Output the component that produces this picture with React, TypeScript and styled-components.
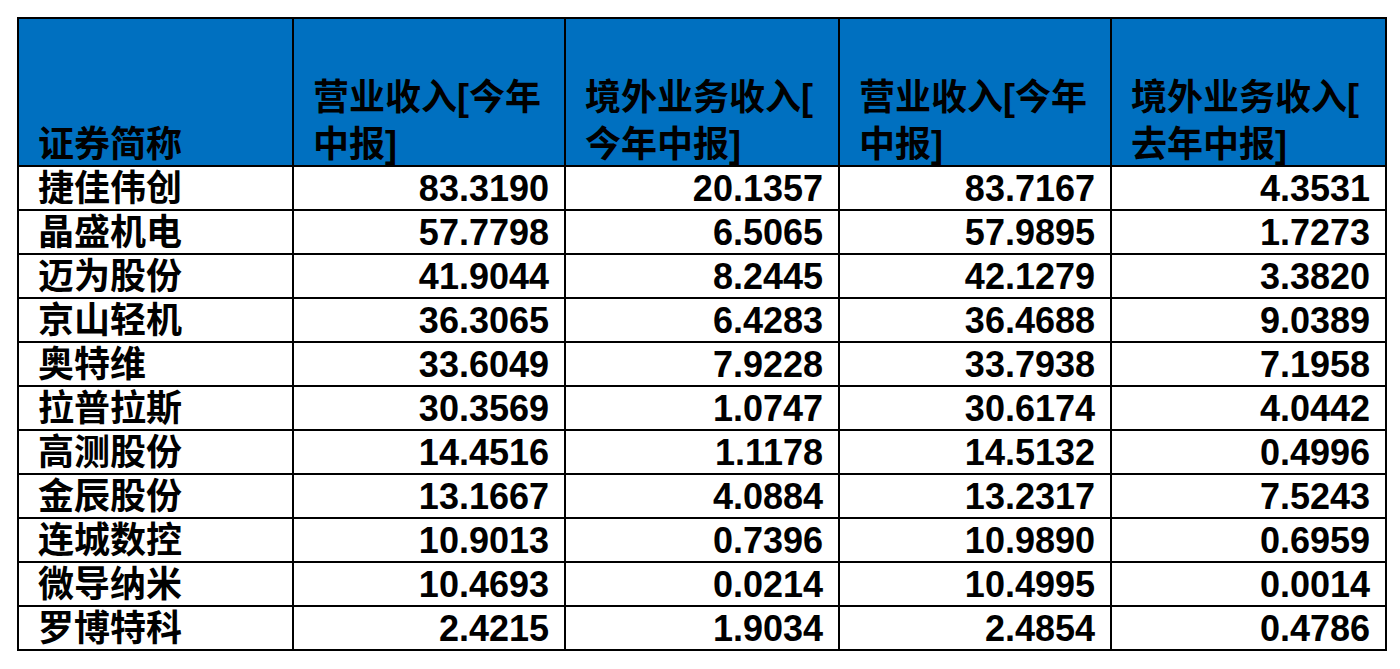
import styled, { createGlobalStyle } from "styled-components"

const GlobalStyle = createGlobalStyle`
  html, body {
    margin: 0;
    padding: 0;
    background: #ffffff;
  }
`

const Page = styled.div`
  padding: 17px 0 0 17px;
  width: 1400px;
  height: 669px;
  box-sizing: border-box;
  overflow: hidden;
`

const Table = styled.table`
  border-collapse: collapse;
  table-layout: fixed;
  width: 1368px;
  font-family: "Liberation Sans", "Noto Sans CJK SC", sans-serif;
  font-weight: 700;
  font-size: 36px;
  color: #000;
`

const HeadCell = styled.th`
  background: #0070c0;
  border: 2px solid #000;
  height: 146px;
  padding: 0 8px 0 19px;
  text-align: left;
  vertical-align: bottom;
  line-height: 47px;
  font-weight: 700;
  overflow: hidden;
  line-break: anywhere;
`

const HeadText = styled.div`
  position: relative;
  top: 3px;
`

const Cell = styled.td<{ $num?: boolean }>`
  border: 2px solid #000;
  height: 42px;
  padding: 0 ${(p) => (p.$num ? "15px" : "8px")} 0 ${(p) => (p.$num ? "8px" : "19px")};
  text-align: ${(p) => (p.$num ? "right" : "left")};
  vertical-align: bottom;
  line-height: 40px;
  white-space: nowrap;
  overflow: hidden;
`

const widths = [275, 272, 274, 272, 275]

const headers = [
  "证券简称",
  "营业收入[今年中报]",
  "境外业务收入[今年中报]",
  "营业收入[今年中报]",
  "境外业务收入[去年中报]",
]

const rows: [string, string, string, string, string][] = [
  ["捷佳伟创", "83.3190", "20.1357", "83.7167", "4.3531"],
  ["晶盛机电", "57.7798", "6.5065", "57.9895", "1.7273"],
  ["迈为股份", "41.9044", "8.2445", "42.1279", "3.3820"],
  ["京山轻机", "36.3065", "6.4283", "36.4688", "9.0389"],
  ["奥特维", "33.6049", "7.9228", "33.7938", "7.1958"],
  ["拉普拉斯", "30.3569", "1.0747", "30.6174", "4.0442"],
  ["高测股份", "14.4516", "1.1178", "14.5132", "0.4996"],
  ["金辰股份", "13.1667", "4.0884", "13.2317", "7.5243"],
  ["连城数控", "10.9013", "0.7396", "10.9890", "0.6959"],
  ["微导纳米", "10.4693", "0.0214", "10.4995", "0.0014"],
  ["罗博特科", "2.4215", "1.9034", "2.4854", "0.4786"],
]

const App = () => {
  return (
    <Page>
      <GlobalStyle />
      <Table>
        <colgroup>
          {widths.map((w, i) => (
            <col key={i} style={{ width: w }} />
          ))}
        </colgroup>
        <thead>
          <tr>
            {headers.map((h, i) => (
              <HeadCell key={i}>
                <HeadText>{h}</HeadText>
              </HeadCell>
            ))}
          </tr>
        </thead>
        <tbody>
          {rows.map((r, ri) => (
            <tr key={ri}>
              {r.map((v, ci) => (
                <Cell key={ci} $num={ci > 0}>
                  {v}
                </Cell>
              ))}
            </tr>
          ))}
        </tbody>
      </Table>
    </Page>
  )
}

export default App
